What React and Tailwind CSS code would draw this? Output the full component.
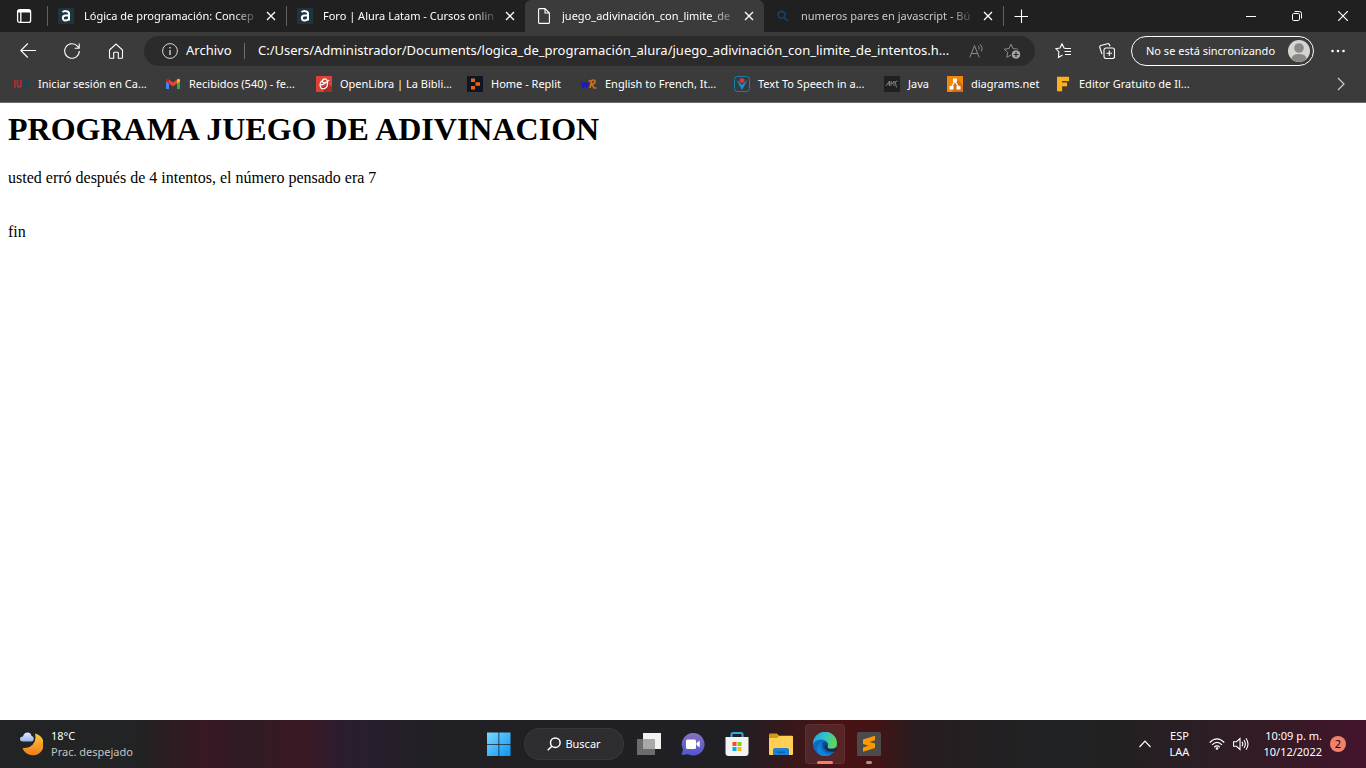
import React from "react";

const TabIcon = () => (
  <svg viewBox="0 0 16 16" className="size-4 shrink-0">
    <rect width="16" height="16" fill="#1e3540" />
    <path
      d="M4.6 4.2C5.4 2.9 11 2.2 11 5.6V12.6M11 7.6H7.4C4 7.6 4 12.6 7.4 12.6C9.2 12.6 10.4 11.8 11 10.6"
      fill="none"
      stroke="#fff"
      strokeWidth="2"
    />
  </svg>
);

const FileIcon = () => (
  <svg viewBox="0 0 16 16" className="size-4 shrink-0" fill="none" stroke="#fff" strokeWidth="1.1">
    <path d="M3.6.6H9L13.4 5V14.4Q13.4 15.4 12.4 15.4H3.6Q2.6 15.4 2.6 14.4V1.6Q2.6.6 3.6.6ZM9 .8V5H13.2" />
  </svg>
);

const LensIcon = () => (
  <svg viewBox="0 0 16 16" className="size-4 shrink-0" fill="none" stroke="#17446d" strokeWidth="1.6">
    <circle cx="6.6" cy="6.8" r="3.4" />
    <path d="M9.2 9.6L12.8 13" />
  </svg>
);

const tabs = [
  { title: "Lógica de programación: Concep", icon: <TabIcon />, divider: true },
  { title: "Foro | Alura Latam - Cursos onlin", icon: <TabIcon />, divider: true },
  { title: "juego_adivinación_con_limite_de", icon: <FileIcon />, active: true },
  { title: "numeros pares en javascript - Bú", icon: <LensIcon />, dim: true },
];

const bookmarks = [
  {
    title: "Iniciar sesión en Ca...",
    width: "w-[135px]",
    icon: (
      <>
        <path d="M.9 4V11.800M3.500 4V9.200Q3.500 11 5.200 11T6.900 9.200V4" stroke="#a82f3b" strokeWidth="1.800" fill="none" />
        <path d="M9.900 4.900H11.500Q14.700 4.900 14.700 7.900T11.500 10.900H9.900Z" stroke="#1b4358" strokeWidth="1.900" fill="none" />
      </>
    ),
  },
  {
    title: "Recibidos (540) - fe...",
    width: "w-[135px]",
    icon: (
      <>
        <path d="M1 4V13H4V6.500Z" fill="#4285f4" />
        <path d="M12 6.500V13H15V4Z" fill="#34a853" />
        <path d="M4 3.500L8 6.500L12 3.500V7.500L8 10.500L4 7.500Z" fill="#ea4335" />
        <path d="M1 4Q1.600 1.600 4 3.500V7.500L1 5.500Z" fill="#c5221f" />
        <path d="M15 4Q14.400 1.600 12 3.500V7.500L15 5.500Z" fill="#fbbc04" />
      </>
    ),
  },
  {
    title: "OpenLibra | La Bibli...",
    width: "w-[135px]",
    icon: (
      <>
        <rect width="16" height="16" fill="#dd4237" />
        <path d="M12 8L16 11V16H8L5 12Z" fill="#a92d27" />
        <path
          d="M6.500 4.500Q3.500 6.500 4.200 10T8 12.600Q11.500 12 11.500 7.500T9 2.800Q6.500 3 6.500 5.200T9.500 6.500Q11.500 6 13 4M3.500 8.800Q8 9.200 10.500 6"
          fill="none"
          stroke="#fff"
          strokeWidth="1.200"
        />
      </>
    ),
  },
  {
    title: "Home - Replit",
    width: "w-[98px]",
    icon: (
      <>
        <rect width="16" height="16" fill="#0e1525" />
        <path d="M4 2.500H8V6H4ZM8.500 6.300H13V9.800H8.500ZM4 10H8V13.500H4Z" fill="#f26207" />
      </>
    ),
  },
  {
    title: "English to French, It...",
    width: "w-[137px]",
    icon: (
      <>
        <path d="M.7 6L2.300 11L4.200 7L5.800 11L7.500 6" fill="none" stroke="#1515d8" strokeWidth="1.700" />
        <path
          d="M9 12L10.800 4.500M7.500 5.500Q14.500 2.500 14 5.500T10.500 8L13 12H15.500"
          fill="none"
          stroke="#c96f1c"
          strokeWidth="1.700"
        />
      </>
    ),
  },
  {
    title: "Text To Speech in a...",
    width: "w-[134px]",
    icon: (
      <>
        <rect x=".5" y=".5" width="15" height="15" rx="3" fill="#313b41" stroke="#1a80b0" />
        <path d="M2.500 4L8 14L13.500 4L10 7L8 9L6 7Z" fill="#1b91c9" />
        <circle cx="8" cy="4.500" r="2.500" fill="#d63a34" />
      </>
    ),
  },
  {
    title: "Java",
    width: "w-[47px]",
    icon: (
      <>
        <rect width="16" height="16" fill="#202020" />
        <path
          d="M2 10L5.500 5V10M3.500 8H6M7 10V5.500L8.500 8L10 5V10M13.500 5Q10.500 5 11.500 7.500L12.500 11.500"
          fill="none"
          stroke="#858585"
          strokeWidth=".9"
        />
      </>
    ),
  },
  {
    title: "diagrams.net",
    width: "w-[92px]",
    icon: (
      <>
        <rect width="16" height="16" fill="#f08705" />
        <path d="M10 3L16 9V16H5Z" fill="#df6c0c" />
        <path d="M8 5L4.500 11M8 5L11.500 11" stroke="#fff" strokeWidth="1.300" />
        <path d="M6 2.500H10V6H6ZM2.500 10H6.500V13.500H2.500ZM9.500 10H13.500V13.500H9.500Z" fill="#fff" />
      </>
    ),
  },
  {
    title: "Editor Gratuito de Il...",
    width: "w-[137px]",
    icon: (
      <>
        <path d="M3 1.500H15V6H8V7H13V11H8V16H3Z" fill="#594619" />
        <path d="M2 .8H14V5H7V6.500H12V10.200H7V15.200H2Z" fill="#fbb11b" />
      </>
    ),
  },
];

const Divider = () => <span className="h-5 w-px shrink-0 bg-[#606060]"></span>;

const Tab = ({ tab }) => (
  <div className={`flex h-8 w-[239px] items-center pr-[6px] ${tab.active ? "rounded-t-md bg-[#3b3b3b]" : ""}`}>
    {tab.divider ? <Divider /> : <span className="w-px"></span>}
    <span className="ml-[10px] flex">{tab.icon}</span>
    <span
      className={`ml-[10px] w-[176px] whitespace-nowrap mask-r-from-85% ${
        tab.dim ? "text-[#c9c9c9]" : "text-white"
      }`}
    >
      {tab.title}
    </span>
    <button aria-label="Cerrar pestaña" className="ml-auto flex size-[18px] items-center justify-center">
      <svg viewBox="0 0 10 10" className="size-[10px]" stroke="#fff" strokeWidth="1.300">
        <path d="M1 1L9 9M9 1L1 9" />
      </svg>
    </button>
  </div>
);

const TitleBar = () => (
  <div className="flex h-8 items-center bg-[#202020]">
    <button aria-label="Menú de pestañas" className="flex w-[47px] justify-center">
      <svg viewBox="0 0 16 16" className="size-4" fill="none" stroke="#fff" strokeWidth="1.300">
        <rect x="1.600" y="1.600" width="13" height="12.800" rx="2" />
        <path d="M2 3.200H14" strokeWidth="2.600" />
        <path d="M4.800 4V14" />
      </svg>
    </button>
    {tabs.map((tab) => (
      <Tab key={tab.title} tab={tab} />
    ))}
    <Divider />
    <button aria-label="Nueva pestaña" className="flex w-[34px] justify-center">
      <svg viewBox="0 0 14 14" className="size-[14px]" stroke="#fff" strokeWidth="1.100">
        <path d="M7.500 .5V14.500M.5 7.500H14" />
      </svg>
    </button>
    <div className="ml-auto flex">
      <button aria-label="Minimizar" className="flex w-[46px] justify-center">
        <svg viewBox="0 0 10 10" className="size-[10px]" stroke="#fff">
          <path d="M0 5.500H10" />
        </svg>
      </button>
      <button aria-label="Restaurar" className="flex w-[46px] justify-center">
        <svg viewBox="0 0 10 10" className="size-[10px]" fill="none" stroke="#fff">
          <rect x=".5" y="2.500" width="7" height="7" rx="1.200" />
          <path d="M2.500.5H7.500Q9.500.5 9.500 2.500V7.500" />
        </svg>
      </button>
      <button aria-label="Cerrar" className="flex w-[46px] justify-center">
        <svg viewBox="0 0 10 10" className="size-[10px]" stroke="#fff" strokeWidth="1.200">
          <path d="M0 0L10 10M10 0L0 10" />
        </svg>
      </button>
    </div>
  </div>
);

const STAR =
  "M8 1.200L10 5.600L14.800 6.200L11.300 9.500L12.200 14.300L8 12L3.800 14.300L4.700 9.500L1.200 6.200L6 5.600Z";

const Toolbar = () => (
  <div className="flex h-[38px] items-center">
    <div className="flex w-36 pl-[6px]">
      <button aria-label="Atrás" className="flex w-11 justify-center">
        <svg viewBox="0 0 16 16" className="size-4" fill="none" stroke="#fff" strokeWidth="1.100">
          <path d="M16 7.500H.8M7.800.5L.8 7.500L7.800 14.500" />
        </svg>
      </button>
      <button aria-label="Actualizar" className="flex w-11 justify-center">
        <svg viewBox="0 0 16 16" className="size-4" fill="none" stroke="#fff" strokeWidth="1.100">
          <path d="M15.300 8A7.300 7.300 0 1 1 13.600 3.300L15 5M15.200.5V5.200H10.600" />
        </svg>
      </button>
      <button aria-label="Inicio" className="flex w-11 justify-center">
        <svg viewBox="0 0 16 16" className="size-4" fill="none" stroke="#fff" strokeWidth="1.100">
          <path d="M1.500 7L8 1L14.500 7V14.500Q14.500 15.300 13.700 15.300H10.300V10Q10.300 9.300 9.500 9.300H6.500Q5.700 9.300 5.700 10V15.300H2.300Q1.500 15.300 1.500 14.500Z" />
        </svg>
      </button>
    </div>
    <div className="flex h-[30px] flex-1 items-center rounded-full bg-[#2b2b2b] pl-[18px] pr-[14px] text-[13px] text-white">
      <svg viewBox="0 0 16 16" className="size-4 shrink-0" fill="none" stroke="#d5d5d5">
        <circle cx="8" cy="8" r="7.400" />
        <path d="M8 7V12M8 4V5.400" strokeWidth="1.400" />
      </svg>
      <label htmlFor="url" className="ml-2 w-[58px]">
        Archivo
      </label>
      <span className="mr-[13px] h-4 w-px bg-[#707070]"></span>
      <input
        id="url"
        readOnly
        defaultValue="C:/Users/Administrador/Documents/logica_de_programación_alura/juego_adivinación_con_limite_de_intentos.h..."
        className="min-w-0 flex-1 bg-transparent outline-none"
      />
      <button aria-label="Leer en voz alta" className="ml-1">
        <svg viewBox="0 0 16 16" className="size-4" fill="none" stroke="#8c8c8c">
          <path d="M.8 14.500L5.500 2.500L10.200 14.500M2.400 10.500H8.600M9.300 3Q10.800 4.500 9.800 6.500M11 1.200Q14.500 4.500 12.500 8.500" />
        </svg>
      </button>
      <button aria-label="Agregar a favoritos" className="ml-[18px]">
        <svg viewBox="0 0 18 16" className="h-4 w-[18px]" fill="none" stroke="#8c8c8c">
          <path d={STAR} />
          <circle cx="13" cy="11.500" r="4.700" fill="#a5a5a5" stroke="#2b2b2b" />
          <path d="M13 9V14M10.500 11.500H15.500" stroke="#2b2b2b" strokeWidth="1.200" />
        </svg>
      </button>
    </div>
    <button aria-label="Favoritos" className="ml-5">
      <svg viewBox="0 0 16 16" className="size-4" fill="none" stroke="#fff" strokeWidth="1.100">
        <path d="M11 5.500L9 5L7 .8L5 5L.8 5.600L3.800 8.700L3.500 14.500L7.500 12M10 5.500H16M9.500 8.500H16M10 11.500H16" />
      </svg>
    </button>
    <button aria-label="Colecciones" className="ml-7">
      <svg viewBox="0 0 16 16" className="size-4" fill="none" stroke="#fff" strokeWidth="1.100">
        <rect x="5" y="5" width="10.500" height="10.500" rx="2" />
        <path d="M10.300 7.500V13M7.500 10.300H13M3 11L.8 4.500Q.3 3 1.800 2.400L8.500.7Q10 .4 10.500 1.800L11 3.200" />
      </svg>
    </button>
    <button className="ml-4 flex h-[30px] w-[183px] items-center justify-between whitespace-nowrap rounded-full border border-white pl-[14px] pr-[3px] text-[11px] text-white">
      No se está sincronizando
      <svg viewBox="0 0 22 22" className="size-[22px]">
        <circle cx="11" cy="11" r="11" fill="#d6d3d0" />
        <circle cx="11" cy="8" r="4.800" fill="#8b8886" />
        <path d="M3.500 19Q4 14 11 14T18.500 19Q11 25 3.500 19Z" fill="#8b8886" />
      </svg>
    </button>
    <button aria-label="Más opciones" className="ml-[17px] mr-[21px]">
      <svg viewBox="0 0 14 4" className="h-1 w-[14px]" fill="#fff">
        <circle cx="1.500" cy="2" r="1.300" />
        <circle cx="7" cy="2" r="1.300" />
        <circle cx="12.500" cy="2" r="1.300" />
      </svg>
    </button>
  </div>
);

const Bookmarks = () => (
  <div className="flex h-[33px] items-center border-b border-[#6b6b6b] pb-1 pl-[14px] text-[11px] text-white">
    <div className="flex min-w-0 flex-1 gap-4">
      {bookmarks.map((b) => (
        <a key={b.title} href="#" className={`flex shrink-0 items-center gap-2 whitespace-nowrap ${b.width}`}>
          <svg viewBox="0 0 16 16" className="size-4 shrink-0">
            {b.icon}
          </svg>
          {b.title}
        </a>
      ))}
    </div>
    <button aria-label="Más favoritos" className="mr-5">
      <svg viewBox="0 0 10 14" className="h-[14px] w-[10px]" fill="none" stroke="#ccc" strokeWidth="1.200">
        <path d="M2 1L8 7L2 13" />
      </svg>
    </button>
  </div>
);

const Page = () => (
  <main className="flex-1 bg-white p-2 font-['Liberation_Serif',serif] text-base leading-[18px] text-black">
    <h1 className="mb-[21px] text-[32px] font-bold leading-[37px]">PROGRAMA JUEGO DE ADIVINACION</h1>
    usted erró después de 4 intentos, el número pensado era 7
    <br />
    <br />
    <br />
    fin
  </main>
);

const TaskButton = ({ label, active, children }) => (
  <button
    aria-label={label}
    className={`relative mx-[2px] flex size-10 items-center justify-center rounded ${
      active ? "bg-white/8 ring-1 ring-white/5 ring-inset" : ""
    }`}
  >
    {children}
  </button>
);

const Taskbar = () => (
  <footer className="grid h-12 grid-cols-[1fr_auto_1fr] items-center bg-[linear-gradient(90deg,#212324_0%,#222324_10%,#2e1c22_13%,#381824_15%,#2f1c24_18%,#3a1822_22%,#2b1d2d_25%,#261f2c_28%,#212124_32%,#201f23_54%,#4a1214_61%,#451315_64%,#281c1f_67%,#232022_72%,#212324_79%,#212121_81%,#2c1e25_88%,#361a26_94%,#43142c_100%)] text-white">
    <div className="flex items-center pl-[19px]">
      <svg viewBox="0 0 24 24" className="size-6">
        <defs>
          <linearGradient id="moon" x2="0" y2="1">
            <stop stopColor="#ffc83d" />
            <stop offset="1" stopColor="#f07c1a" />
          </linearGradient>
          <linearGradient id="cloud" x2="0" y2="1">
            <stop stopColor="#e1eaff" />
            <stop offset="1" stopColor="#9ab6f0" />
          </linearGradient>
        </defs>
        <path d="M16 1.500A11 11 0 1 1 3.500 16Q10 16.500 13.800 12.500T16 1.500Z" fill="url(#moon)" />
        <path d="M4 9.500Q1 9.500 1 7T4 4.500Q5 .5 8.500 .5T12.500 4Q14.800 4.300 14.800 6.800T12.500 9.500Z" fill="url(#cloud)" />
      </svg>
      <div className="ml-2 text-[11px] leading-4">
        <p>18°C</p>
        <p className="text-[#c3c3c3]">Prac. despejado</p>
      </div>
    </div>

    <div className="flex items-center pl-[2px]">
      <TaskButton label="Inicio">
        <svg viewBox="0 0 24 24" className="size-6">
          <defs>
            <linearGradient id="win" x2="1" y2="1">
              <stop stopColor="#7ad8ff" />
              <stop offset="1" stopColor="#0a95f5" />
            </linearGradient>
          </defs>
          <path
            d="M0 .5H11.500V12H0ZM12.300.5H23.500V12H12.300ZM0 12.800H11.500V24H0ZM12.300 12.800H23.500V24H12.300Z"
            fill="url(#win)"
          />
        </svg>
      </TaskButton>
      <button className="mx-[3px] flex h-8 w-[100px] items-center justify-center gap-1 rounded-full border border-white/5 bg-white/6 text-[11px]">
        <svg viewBox="0 0 14 14" className="size-[14px]" fill="none" stroke="#fff" strokeWidth="1.500">
          <circle cx="8.300" cy="5.700" r="4.800" />
          <path d="M4.800 9.200L.7 13.300" />
        </svg>
        Buscar
      </button>
      <TaskButton label="Vista de tareas">
        <svg viewBox="0 0 24 24" className="size-6">
          <path d="M6 1H24V17H6Z" fill="#f1f1f1" />
          <path d="M0 7H18V23H0Z" fill="#6c6c6c" />
          <path d="M6 7H18V17H6Z" fill="#a8a8a8" />
        </svg>
      </TaskButton>
      <TaskButton label="Chat">
        <svg viewBox="0 0 24 24" className="size-6">
          <defs>
            <linearGradient id="chat" x2="0" y2="1">
              <stop stopColor="#8a71ba" />
              <stop offset="1" stopColor="#4f56cf" />
            </linearGradient>
          </defs>
          <path d="M12 1A11.300 11.300 0 1 1 7 22.300L.5 23L2 17.500A11.300 11.300 0 0 1 12 1Z" fill="url(#chat)" />
          <rect x="5" y="7.500" width="10" height="9.500" rx="1.500" fill="#fff" />
          <path d="M15.500 11L18.700 8.500V15.500L15.500 13Z" fill="#fff" />
        </svg>
      </TaskButton>
      <TaskButton label="Microsoft Store">
        <svg viewBox="0 0 24 24" className="size-6">
          <path
            d="M6.500 6V2.500Q6.500 1 8 1H16Q17.500 1 17.500 2.500V6"
            fill="none"
            stroke="#2aaae8"
            strokeWidth="2"
          />
          <path d="M.5 5H23.500V21Q23.500 24 20.500 24H3.500Q.5 24 .5 21Z" fill="#f3f3f3" />
          <path d="M7.500 10H11.500V14H7.500Z" fill="#f1511b" />
          <path d="M12.500 10H16.500V14H12.500Z" fill="#80cc28" />
          <path d="M7.500 15H11.500V19H7.500Z" fill="#00adef" />
          <path d="M12.500 15H16.500V19H12.500Z" fill="#fbbc09" />
        </svg>
      </TaskButton>
      <TaskButton label="Explorador de archivos">
        <svg viewBox="0 0 24 24" className="size-6">
          <path d="M0 2.500Q0 1.500 1 1.500H8L10.500 4V8H0Z" fill="#d39b10" />
          <path d="M0 6H8L10.500 3.800H23Q24 3.800 24 4.800V22Q24 23 23 23H1Q0 23 0 22Z" fill="#ffd055" />
          <path d="M4 23V18Q4 16 6 16H18Q20 16 20 18V23Z" fill="#1f80d0" />
          <path d="M8 19.500H16V21H8Z" fill="#115ea8" />
        </svg>
      </TaskButton>
      <TaskButton label="Microsoft Edge" active>
        <svg viewBox="0 0 24 24" className="size-6">
          <defs>
            <linearGradient id="edge" x2="1" y2=".3">
              <stop stopColor="#1c9fe0" />
              <stop offset=".5" stopColor="#2fc2cd" />
              <stop offset="1" stopColor="#62d45b" />
            </linearGradient>
          </defs>
          <circle cx="12" cy="12" r="12" fill="#0f6cc4" />
          <path
            d="M0 12A12 12 0 0 1 24 11.500Q24 16.500 18.500 16.500Q14 16.500 14.300 14.500Q16 13 14.500 10.500Q12 7 7.500 7.500Q2 8 0 12Z"
            fill="url(#edge)"
          />
          <path d="M9.500 9.500Q5.500 13 9 18T18.500 22.200A12 12 0 0 1 5 21.500Q2 14 9.500 9.500Z" fill="#1283d8" />
          <path
            d="M9.500 11Q9 19 16 20.200Q20 20.600 22.300 17.500Q20 18.500 17 17.800Q13.500 17 14.500 14.500Q16 12.500 13.500 10.500Q11 9 9.500 11Z"
            fill="#0b4a91"
          />
          <path
            d="M14.300 14.500Q13.800 16.800 18 17Q21 17 23 15.500L24 17.500L21.500 20Q18.500 19 15 18.500Q11 16 12 13.500Q13.500 12.500 14.300 14.500Z"
            fill="#241517"
            opacity=".7"
          />
        </svg>
        <span className="absolute bottom-0 h-[3px] w-4 rounded-full bg-[#f3806b]"></span>
      </TaskButton>
      <TaskButton label="Sublime Text">
        <svg viewBox="0 0 24 24" className="size-6">
          <rect width="24" height="24" rx="1.500" fill="#4b4b4b" />
          <path
            d="M6 7.500L18 3.800V8.200L12.500 10L18 11.500V16L6 19.800V15.500L11.500 13.700L6 12Z"
            fill="#ff9800"
          />
        </svg>
        <span className="absolute bottom-0 h-[3px] w-[6px] rounded-full bg-[#a09696]"></span>
      </TaskButton>
    </div>

    <div className="flex items-center justify-end pr-5 text-[11px] leading-4">
      <button aria-label="Iconos ocultos">
        <svg viewBox="0 0 12 8" className="h-2 w-3" fill="none" stroke="#fff" strokeWidth="1.200">
          <path d="M.5 7L6 1.200L11.500 7" />
        </svg>
      </button>
      <button className="ml-4 w-6 text-center">
        ESP
        <br />
        LAA
      </button>
      <button aria-label="Red y sonido" className="ml-[18px] flex items-center gap-2">
        <svg viewBox="0 0 16 12" className="h-3 w-4" fill="none" stroke="#fff" strokeWidth="1.200">
          <path d="M.7 4.500Q8-2.800 15.300 4.500M3 6.900Q8 2 13 6.900M5.200 9.200Q8 6.600 10.800 9.200" />
          <circle cx="8" cy="10.500" r="1.300" fill="#fff" stroke="none" />
        </svg>
        <svg viewBox="0 0 16 14" className="h-[14px] w-4" fill="none" stroke="#fff" strokeWidth="1.100">
          <path d="M.6 4.700H3.500L7 1.500V12.500L3.500 9.300H.6ZM9 4.800Q10.500 7 9 9.200M11 3Q13.700 7 11 11M13 1.200Q17 7 13 12.800" />
        </svg>
      </button>
      <button className="ml-[14px] whitespace-nowrap text-right">
        10:09 p. m.
        <br />
        10/12/2022
      </button>
      <span className="ml-2 flex size-4 items-center justify-center rounded-full bg-[#f3806b] text-[11px] text-black">
        2
      </span>
    </div>
  </footer>
);

const App = () => {
  return (
    <div className="flex min-h-screen flex-col overflow-x-hidden bg-[#3b3b3b] font-['Noto_Sans','Open_Sans',sans-serif] text-[11px]">
      <header>
        <TitleBar />
        <Toolbar />
        <Bookmarks />
      </header>
      <Page />
      <Taskbar />
    </div>
  );
};

export default App;
